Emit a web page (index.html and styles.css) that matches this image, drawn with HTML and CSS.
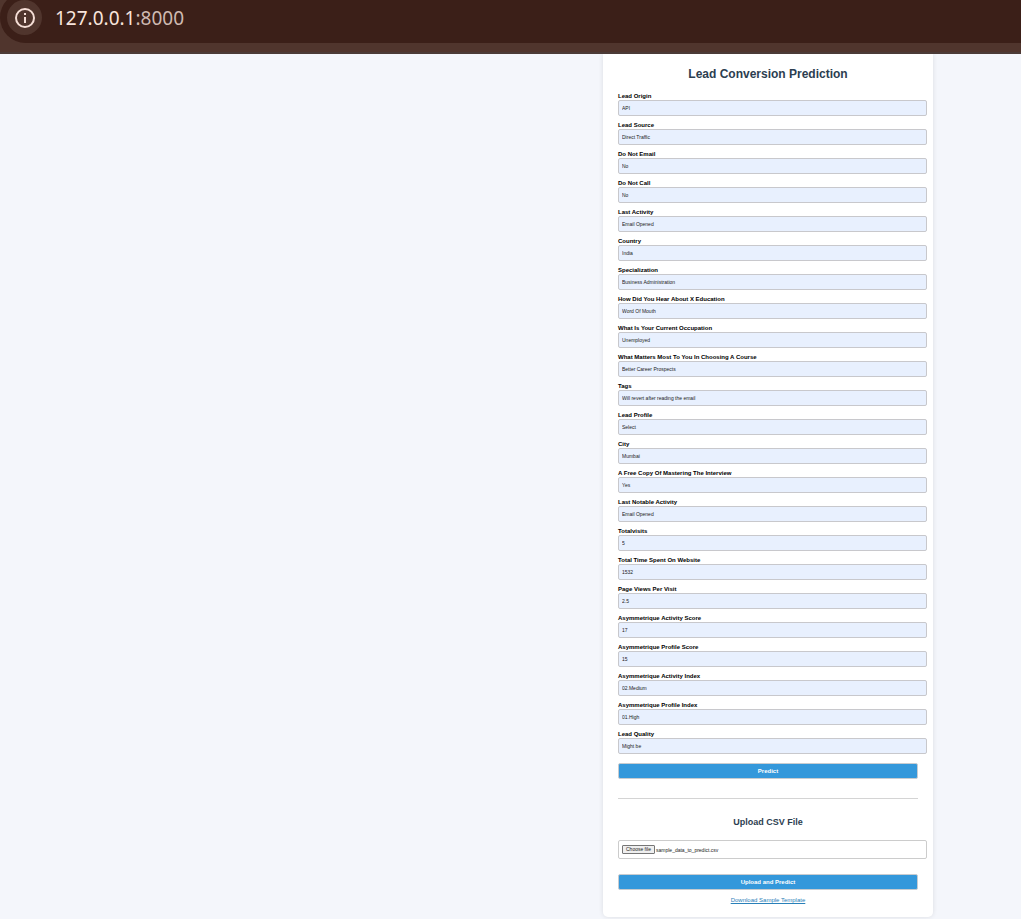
FILE: index.html
```
<!DOCTYPE html>
<html lang="en">
<head>
<meta charset="utf-8">
<meta name="viewport" content="width=device-width, initial-scale=1">
<title>Lead Conversion Prediction</title>
<link rel="stylesheet" href="styles.css">
</head>
<body>
<header class="browser-bar">
  <div class="address">
    <button class="site-info" type="button" aria-label="View site information">
      <svg width="20" height="20" viewBox="0 0 20 20" aria-hidden="true">
        <circle cx="10" cy="10" r="9" fill="none" stroke="#f5ded6" stroke-width="2"/>
        <rect x="9" y="5" width="2" height="2" fill="#f5ded6"/>
        <rect x="9" y="9" width="2" height="6" fill="#f5ded6"/>
      </svg>
    </button>
    <span class="url">127.0.0.1<span class="port">:8000</span></span>
  </div>
</header>
<main class="page">
  <section class="card">
    <h1 class="title">Lead Conversion Prediction</h1>
    <form class="lead-form">
      <div class="field"><label for="f1">Lead Origin</label><input id="f1" type="text" value="API"></div>
      <div class="field"><label for="f2">Lead Source</label><input id="f2" type="text" value="Direct Traffic"></div>
      <div class="field"><label for="f3">Do Not Email</label><input id="f3" type="text" value="No"></div>
      <div class="field"><label for="f4">Do Not Call</label><input id="f4" type="text" value="No"></div>
      <div class="field"><label for="f5">Last Activity</label><input id="f5" type="text" value="Email Opened"></div>
      <div class="field"><label for="f6">Country</label><input id="f6" type="text" value="India"></div>
      <div class="field"><label for="f7">Specialization</label><input id="f7" type="text" value="Business Administration"></div>
      <div class="field"><label for="f8">How Did You Hear About X Education</label><input id="f8" type="text" value="Word Of Mouth"></div>
      <div class="field"><label for="f9">What Is Your Current Occupation</label><input id="f9" type="text" value="Unemployed"></div>
      <div class="field"><label for="f10">What Matters Most To You In Choosing A Course</label><input id="f10" type="text" value="Better Career Prospects"></div>
      <div class="field"><label for="f11">Tags</label><input id="f11" type="text" value="Will revert after reading the email"></div>
      <div class="field"><label for="f12">Lead Profile</label><input id="f12" type="text" value="Select"></div>
      <div class="field"><label for="f13">City</label><input id="f13" type="text" value="Mumbai"></div>
      <div class="field"><label for="f14">A Free Copy Of Mastering The Interview</label><input id="f14" type="text" value="Yes"></div>
      <div class="field"><label for="f15">Last Notable Activity</label><input id="f15" type="text" value="Email Opened"></div>
      <div class="field"><label for="f16">Totalvisits</label><input id="f16" type="text" value="5"></div>
      <div class="field"><label for="f17">Total Time Spent On Website</label><input id="f17" type="text" value="1532"></div>
      <div class="field"><label for="f18">Page Views Per Visit</label><input id="f18" type="text" value="2.5"></div>
      <div class="field"><label for="f19">Asymmetrique Activity Score</label><input id="f19" type="text" value="17"></div>
      <div class="field"><label for="f20">Asymmetrique Profile Score</label><input id="f20" type="text" value="15"></div>
      <div class="field"><label for="f21">Asymmetrique Activity Index</label><input id="f21" type="text" value="02.Medium"></div>
      <div class="field"><label for="f22">Asymmetrique Profile Index</label><input id="f22" type="text" value="01.High"></div>
      <div class="field"><label for="f23">Lead Quality</label><input id="f23" type="text" value="Might be"></div>
      <button class="submit" type="submit">Predict</button>
    </form>
    <hr class="divider">
    <h2 class="subtitle">Upload CSV File</h2>
    <form class="upload-form">
      <input class="file-input" id="csv" type="file" accept=".csv">
      <label class="file-box" for="csv"><span class="file-button">Choose file</span><span>sample_data_to_predict.csv</span></label>
      <button class="submit" type="submit">Upload and Predict</button>
    </form>
    <a class="template-link" href="#">Download Sample Template</a>
  </section>
</main>
</body>
</html>
```
FILE: styles.css
```
* {
  box-sizing: border-box;
}

body {
  margin: 0;
  background: #f4f6fb;
  font-family: "Liberation Sans", Arial, sans-serif;
  color: #000;
}

.browser-bar {
  position: relative;
  height: 54px;
  overflow: hidden;
  background: #50352d;
  border-bottom: 2px solid #4b3b37;
}

.address {
  display: flex;
  align-items: center;
  gap: 13px;
  height: 51px;
  margin-top: -8px;
  padding-left: 7px;
  background: #3b1f18;
  border-radius: 26px 0 0 26px;
}

.site-info {
  display: flex;
  align-items: center;
  justify-content: center;
  width: 35px;
  height: 35px;
  padding: 0;
  border: 0;
  border-radius: 50%;
  background: #50352d;
}

.url {
  font-family: "Noto Sans", "Open Sans", sans-serif;
  font-size: 19px;
  line-height: 24px;
  color: #f8e4dc;
}

.port {
  color: #cfbab2;
}

.page {
  display: flex;
  justify-content: flex-end;
  padding: 0 88px 2px 0;
}

.card {
  width: 330px;
  padding: 13px 15px;
  background: #fff;
  border-radius: 0 0 5px 5px;
  box-shadow: 0 0 5px rgba(0, 0, 0, 0.1);
  text-align: center;
}

.title,
.subtitle {
  margin: 0;
  color: #2c3e50;
}

.title {
  margin-bottom: 10px;
  font-size: 12px;
  line-height: 15px;
}

.lead-form,
.upload-form {
  display: flex;
  flex-direction: column;
}

.field {
  display: flex;
  flex-direction: column;
  margin: 0 -9px 5px 0;
  text-align: left;
}

.field label {
  font-size: 6px;
  font-weight: bold;
  line-height: 8px;
}

.field input {
  height: 16px;
  padding: 0 3px;
  border: 1px solid #c8c8cc;
  border-radius: 2px;
  background: #e8f0fe;
  font-family: inherit;
  font-size: 5px;
  color: #222;
}

.submit {
  height: 16px;
  padding: 0;
  border: 1px solid #c8ccd0;
  border-radius: 2px;
  background: #3498db;
  color: #fff;
  font-family: inherit;
  font-size: 6px;
  font-weight: bold;
}

.lead-form .submit {
  margin-top: 4px;
}

.divider {
  margin: 19px 0 18px;
  border: 0;
  border-top: 1px solid #d4d4d4;
}

.subtitle {
  margin-bottom: 12px;
  font-size: 9px;
  line-height: 11px;
}

.file-input {
  position: absolute;
  width: 1px;
  height: 1px;
  opacity: 0;
}

.file-box {
  display: flex;
  align-items: center;
  gap: 1px;
  height: 19px;
  margin: 0 -9px 15px 0;
  padding: 0 3px;
  border: 1px solid #ccc;
  border-radius: 2px;
  font-size: 5px;
  color: #222;
}

.file-button {
  padding: 0 3px;
  border: 1px solid #767676;
  border-radius: 1px;
  background: #efefef;
  line-height: 7px;
}

.template-link {
  display: block;
  width: fit-content;
  margin: 6px auto 0;
  color: #2980b9;
  font-size: 6px;
  line-height: 8px;
}
```
